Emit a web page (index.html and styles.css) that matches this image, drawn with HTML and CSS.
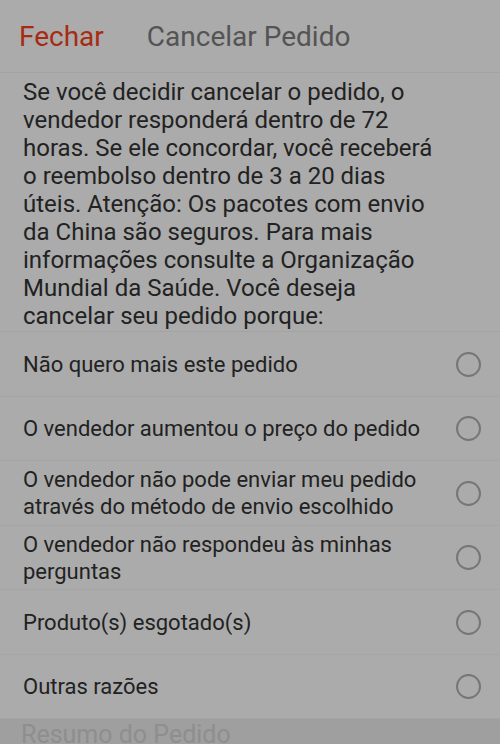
FILE: index.html
```html
<!DOCTYPE html>
<html lang="pt-BR">
<head>
<meta charset="utf-8">
<title>Cancelar Pedido</title>
<link rel="stylesheet" href="styles.css">
</head>
<body>
<div class="sheet">
  <header class="topbar">
    <span class="close">Fechar</span>
    <span class="title">Cancelar Pedido</span>
  </header>
  <p class="intro">Se você decidir cancelar o pedido, o<br>vendedor responderá dentro de 72<br>horas. Se ele concordar, você receberá<br>o reembolso dentro de 3 a 20 dias<br>úteis. Atenção: Os pacotes com envio<br>da China são seguros. Para mais<br>informações consulte a Organização<br>Mundial da Saúde. Você deseja<br>cancelar seu pedido porque:</p>
  <ul class="reasons">
    <li class="reason"><span class="label">Não quero mais este pedido</span><span class="radio"></span></li>
    <li class="reason"><span class="label">O vendedor aumentou o preço do pedido</span><span class="radio"></span></li>
    <li class="reason"><span class="label">O vendedor não pode enviar meu pedido<br>através do método de envio escolhido</span><span class="radio"></span></li>
    <li class="reason"><span class="label">O vendedor não respondeu às minhas<br>perguntas</span><span class="radio"></span></li>
    <li class="reason"><span class="label">Produto(s) esgotado(s)</span><span class="radio"></span></li>
    <li class="reason"><span class="label">Outras razões</span><span class="radio"></span></li>
  </ul>
  <div class="summary">Resumo do Pedido</div>
</div>
</body>
</html>
```

FILE: styles.css
```css
html, body {
  margin: 0;
  padding: 0;
  background: #ababab;
  height: 744px;
  overflow: hidden;
}
body {
  font-family: Roboto, "Noto Sans", sans-serif;
  color: #222222;
}
.sheet {
  display: flex;
  flex-direction: column;
}
.topbar {
  height: 73px;
  display: flex;
  align-items: center;
  gap: 43px;
  padding-left: 19px;
  padding-top: 1px;
  box-sizing: border-box;
  border-bottom: 1px solid #a3a3a3;
  font-size: 28px;
}
.close {
  color: #a72b12;
}
.title {
  color: #545454;
}
.intro {
  margin: 0;
  padding: 5px 23px 0 23px;
  font-size: 24px;
  line-height: 28px;
  height: 253px;
  border-bottom: 1px solid #a3a3a3;
  white-space: nowrap;
}
.reasons {
  list-style: none;
  margin: 0;
  padding: 0;
}
.reason {
  display: flex;
  align-items: center;
  justify-content: space-between;
  padding: 1px 19px 0 23px;
  height: 62.5px;
  border-bottom: 1px solid #a5a5a5;
  font-size: 22px;
  line-height: 27px;
}
.radio {
  width: 21px;
  height: 21px;
  border: 2px solid #767676;
  border-radius: 50%;
  flex: none;
}
.summary {
  background: #9f9f9f;
  height: 40px;
  padding: 1px 0 0 21px;
  font-size: 25px;
  color: #8e8e8e;
}
```
